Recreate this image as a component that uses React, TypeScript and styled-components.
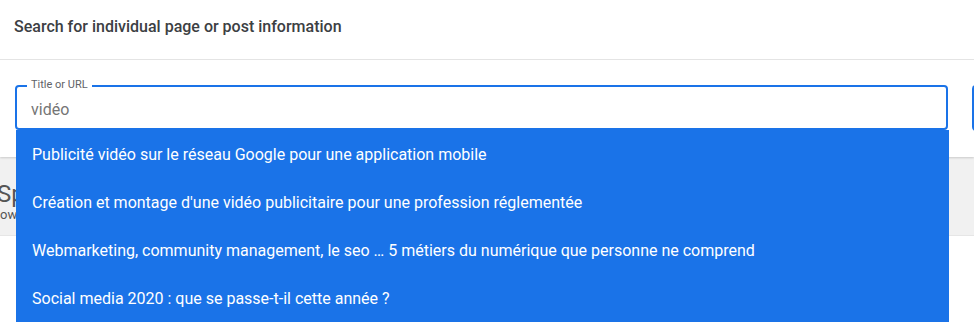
import styled, { createGlobalStyle } from 'styled-components';

const suggestions = [
  'Publicité vidéo sur le réseau Google pour une application mobile',
  "Création et montage d'une vidéo publicitaire pour une profession réglementée",
  'Webmarketing, community management, le seo … 5 métiers du numérique que personne ne comprend',
  'Social media 2020 : que se passe-t-il cette année ?',
];

const GlobalStyle = createGlobalStyle`
  html, body {
    margin: 0;
    padding: 0;
    overflow: hidden;
    background-color: #f1f1f1;
    font-family: Roboto, 'Liberation Sans', Arial, sans-serif;
  }
`;

const App = () => {
  return (
    <Page>
      <GlobalStyle />
      <Card>
        <Header>Search for individual page or post information</Header>
        <SearchRow>
          <Field>
            <Legend>Title or URL</Legend>
            <Input type='text' defaultValue='vidéo' />
            <Dropdown>
              {suggestions.map((s) => (
                <Option key={s}>{s}</Option>
              ))}
            </Dropdown>
          </Field>
          <SearchButton />
        </SearchRow>
      </Card>
      <Band>
        <BandTitle>Sp</BandTitle>
        <BandSub>ow</BandSub>
      </Band>
      <Lower />
    </Page>
  );
};

const Page = styled.div`
  width: 100%;
  min-height: 324px;
  display: flex;
  flex-direction: column;
`;

const Card = styled.div`
  background-color: #fff;
  box-shadow: 0 1px 2px 0 #0000002a;
  position: relative;
  z-index: 2;
`;

const Header = styled.div`
  height: 60px;
  box-sizing: border-box;
  padding: 0 14px 6px;
  display: flex;
  align-items: center;
  font-size: 16px;
  font-weight: 500;
  color: #3c4043;
  border-bottom: 1px solid #e4e4e4;
`;

const SearchRow = styled.div`
  display: flex;
  gap: 24px;
  padding: 25px 0 26px 15px;
`;

const Field = styled.div`
  position: relative;
  width: 933px;
  flex-shrink: 0;
  height: 45px;
  box-sizing: border-box;
  border: 2px solid #1a73e8;
  border-radius: 4px;
`;

const Legend = styled.span`
  position: absolute;
  top: -9px;
  left: 10px;
  padding: 0 4px;
  background-color: #fff;
  font-size: 11px;
  line-height: 14px;
  color: #5f6368;
`;

const Input = styled.input`
  width: 100%;
  height: 100%;
  box-sizing: border-box;
  border: none;
  outline: none;
  background: transparent;
  padding: 3px 14px 0;
  font-family: inherit;
  font-size: 16px;
  color: #757575;
`;

const Dropdown = styled.ul`
  position: absolute;
  top: 43px;
  left: -1px;
  width: 933px;
  margin: 0;
  padding: 0;
  list-style: none;
  background-color: #1a73e8;
`;

const Option = styled.li`
  height: 48px;
  display: flex;
  align-items: center;
  padding: 0 16px;
  font-size: 16px;
  color: #fff;
  white-space: nowrap;
`;

const SearchButton = styled.button`
  width: 120px;
  height: 46px;
  flex-shrink: 0;
  border: 2px solid #1a73e8;
  border-radius: 4px;
  background-color: #fff;
`;

const Band = styled.div`
  height: 78px;
  box-sizing: border-box;
  padding-top: 23px;
  display: flex;
  flex-direction: column;
  margin-left: -3px;
  color: #555;
`;

const BandTitle = styled.div`
  font-size: 24px;
  line-height: 28px;
`;

const BandSub = styled.div`
  font-size: 13px;
  line-height: 14px;
  margin-left: 3px;
`;

const Lower = styled.div`
  flex: 1;
  background-color: #fff;
  border-top: 1px solid #e6e6e6;
`;

export default App;
